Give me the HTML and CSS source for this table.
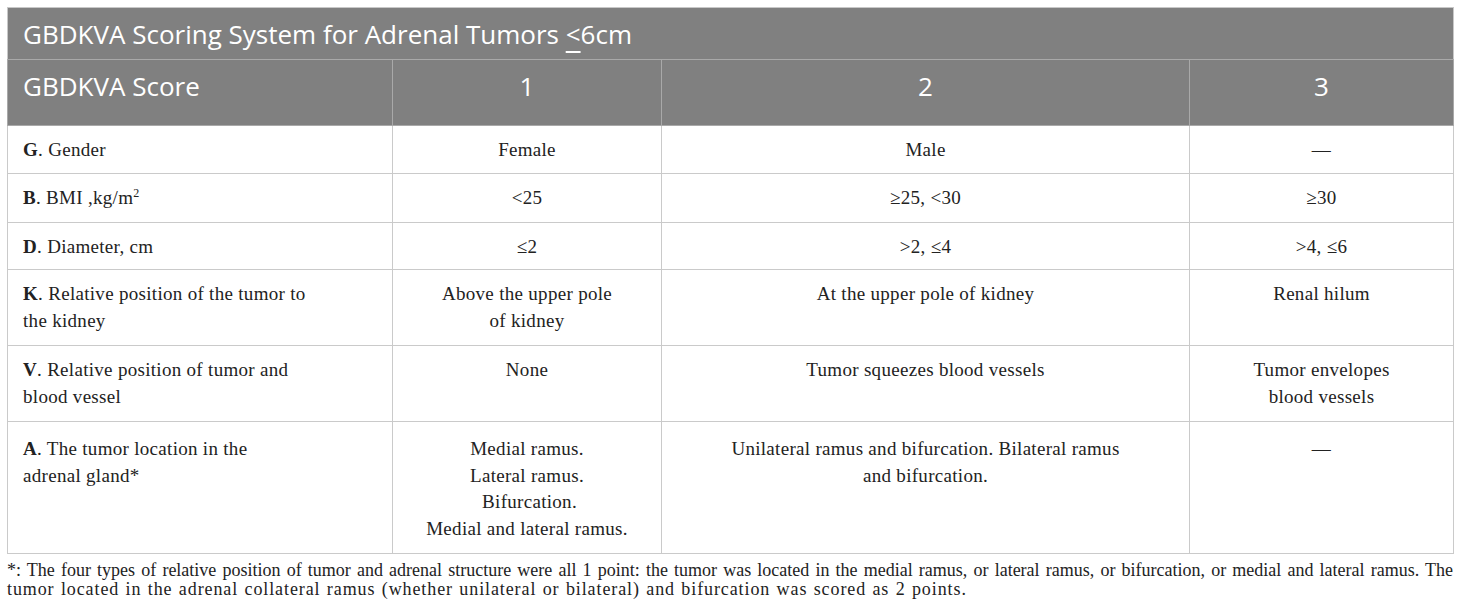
FILE: index.html
```html
<!DOCTYPE html>
<html lang="en">
<head>
<meta charset="utf-8">
<title>GBDKVA Scoring System</title>
<link rel="stylesheet" href="styles.css">
</head>
<body>
<div class="page">
  <table class="score-table">
    <colgroup>
      <col class="c1"><col class="c2"><col class="c3"><col class="c4">
    </colgroup>
    <thead>
      <tr class="row-title">
        <th colspan="4" class="title">GBDKVA Scoring System for Adrenal Tumors <u class="le">&lt;</u>6cm</th>
      </tr>
      <tr class="row-head">
        <th class="hl">GBDKVA Score</th>
        <th>1</th>
        <th>2</th>
        <th>3</th>
      </tr>
    </thead>
    <tbody>
      <tr class="r-g">
        <td class="lab"><b>G</b>. Gender</td>
        <td>Female</td>
        <td>Male</td>
        <td>—</td>
      </tr>
      <tr class="r-b">
        <td class="lab"><b>B</b>. BMI ,kg/m<sup>2</sup></td>
        <td>&lt;25</td>
        <td>≥25, &lt;30</td>
        <td>≥30</td>
      </tr>
      <tr class="r-d">
        <td class="lab"><b>D</b>. Diameter, cm</td>
        <td>≤2</td>
        <td>&gt;2, ≤4</td>
        <td>&gt;4, ≤6</td>
      </tr>
      <tr class="r-k">
        <td class="lab"><b>K</b>. Relative position of the tumor to<br>the kidney</td>
        <td>Above the upper pole<br>of kidney</td>
        <td>At the upper pole of kidney</td>
        <td>Renal hilum</td>
      </tr>
      <tr class="r-v">
        <td class="lab"><b>V</b>. Relative position of tumor and<br>blood vessel</td>
        <td>None</td>
        <td>Tumor squeezes blood vessels</td>
        <td>Tumor envelopes<br>blood vessels</td>
      </tr>
      <tr class="r-a">
        <td class="lab"><b>A</b>. The tumor location in the<br>adrenal gland*</td>
        <td>Medial ramus.<br>Lateral ramus.<br>&nbsp;Bifurcation.<br>Medial and lateral ramus.</td>
        <td>Unilateral ramus and bifurcation. Bilateral ramus<br>and bifurcation.</td>
        <td>—</td>
      </tr>
    </tbody>
  </table>
  <div class="foot">
    <span class="foot-l1">*: The four types of relative position of tumor and adrenal structure were all 1 point: the tumor was located in the medial ramus, or lateral ramus, or bifurcation, or medial and lateral ramus. The</span>
    <span class="foot-l2">tumor located in the adrenal collateral ramus (whether unilateral or bilateral) and bifurcation was scored as 2 points.</span>
  </div>
</div>
</body>
</html>
```

FILE: styles.css
```css
html, body {
  margin: 0;
  padding: 0;
  background: #ffffff;
}

.page {
  padding: 7px 7px 0 7px;
  width: 1446px;
}

.score-table {
  width: 1446px;
  border-collapse: collapse;
  table-layout: fixed;
  font-family: "Liberation Serif", "Times New Roman", serif;
  color: #222222;
}

.c1 { width: 385px; }
.c2 { width: 269px; }
.c3 { width: 528px; }
.c4 { width: 264px; }

.score-table th {
  background: #808080;
  color: #ffffff;
  font-family: "Open Sans", "Noto Sans", sans-serif;
  font-weight: 400;
  font-size: 26px;
  line-height: 32px;
  text-align: center;
  vertical-align: top;
  padding: 10px 15px 0 15px;
  border: 1px solid #a9a9a9;
}

.score-table .title {
  text-align: left;
  border-color: #c8c8c8 #c8c8c8 #a9a9a9 #c8c8c8;
}

.score-table .hl {
  text-align: left;
}

.le {
  text-decoration-thickness: 2px;
  text-underline-offset: 7px;
}

.row-title { height: 52px; }
.row-head { height: 66px; }

.score-table td {
  font-size: 19px;
  line-height: 26.5px;
  letter-spacing: 0.3px;
  text-align: center;
  vertical-align: top;
  padding: 11px 15px 0 15px;
  border: 1px solid #cacaca;
}

.score-table td.lab {
  text-align: left;
  padding-left: 15px;
}

.score-table td b {
  font-weight: 700;
}

.score-table sup {
  font-size: 12px;
  line-height: 0;
  vertical-align: 7px;
}

.r-g { height: 48px; }
.r-b { height: 49px; }
.r-d { height: 47px; }
.r-k { height: 76px; }
.r-v { height: 76px; }
.r-a { height: 132px; }
.r-a td { padding-top: 14px; }

.foot {
  font-family: "Liberation Serif", "Times New Roman", serif;
  font-size: 18px;
  line-height: 19px;
  color: #222222;
  padding-top: 7px;
}

.foot-l1 {
  display: block;
  text-align: justify;
  text-align-last: justify;
  word-spacing: -1px;
}

.foot-l2 {
  display: block;
  letter-spacing: 0.9px;
  word-spacing: 1px;
}
```
